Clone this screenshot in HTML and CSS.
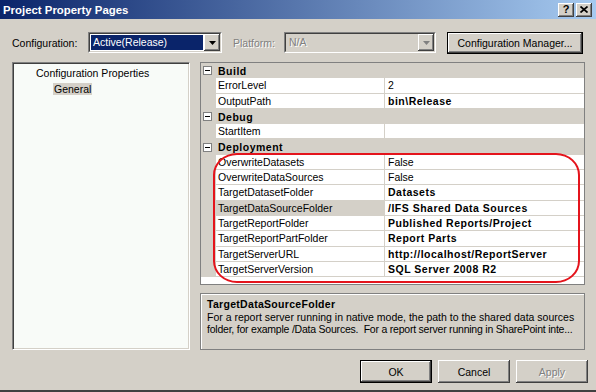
FILE: index.html
```html
<!DOCTYPE html>
<html>
<head>
<meta charset="utf-8">
<title>Project Property Pages</title>
<link rel="stylesheet" href="styles.css">
</head>
<body>
<div class="window">
  <div class="titlebar">
    <span class="title">Project Property Pages</span>
    <div class="caption-btns">
      <span class="cbtn help">?</span>
      <span class="cbtn close"><svg width="8" height="7" viewBox="0 0 8 7"><path d="M0.5 0.5L7.5 6.5M7.5 0.5L0.5 6.5" stroke="#000" stroke-width="1.7" fill="none"/></svg></span>
    </div>
  </div>

  <div class="config-row">
    <span class="lbl cfg">Configuration:</span>
    <div class="combo cfg-combo">
      <div class="combo-inner">
        <div class="combo-field"><span class="combo-sel">Active(Release)</span></div>
        <span class="combo-btn"><svg width="7" height="4" viewBox="0 0 7 4"><path d="M0 0H7L3.5 4Z" fill="#000"/></svg></span>
      </div>
    </div>
    <span class="lbl plat disabled-text">Platform:</span>
    <div class="combo plat-combo">
      <div class="combo-inner">
        <div class="combo-field"><span class="combo-dis disabled-text">N/A</span></div>
        <span class="combo-btn"><svg width="7" height="4" viewBox="0 0 7 4"><path d="M0 0H7L3.5 4Z" fill="#808080"/></svg></span>
      </div>
    </div>
    <button class="btn default cfgmgr">Configuration Manager...</button>
  </div>

  <div class="main">
    <div class="tree">
      <div class="tree-item l1">Configuration Properties</div>
      <div class="tree-item l2"><span class="tree-sel">General</span></div>
    </div>

    <div class="right">
      <div class="grid">
        <div class="cat"><span class="toggle"></span><span class="cat-name">Build</span></div>
        <div class="prop"><span class="n">ErrorLevel</span><span class="v">2</span></div>
        <div class="prop"><span class="n">OutputPath</span><span class="v b">bin\Release</span></div>
        <div class="cat"><span class="toggle"></span><span class="cat-name">Debug</span></div>
        <div class="prop"><span class="n">StartItem</span><span class="v"></span></div>
        <div class="cat"><span class="toggle"></span><span class="cat-name">Deployment</span></div>
        <div class="prop"><span class="n">OverwriteDatasets</span><span class="v">False</span></div>
        <div class="prop"><span class="n">OverwriteDataSources</span><span class="v">False</span></div>
        <div class="prop"><span class="n">TargetDatasetFolder</span><span class="v b">Datasets</span></div>
        <div class="prop"><span class="n sel">TargetDataSourceFolder</span><span class="v b">/IFS Shared Data Sources</span></div>
        <div class="prop"><span class="n">TargetReportFolder</span><span class="v b">Published Reports/Project</span></div>
        <div class="prop"><span class="n">TargetReportPartFolder</span><span class="v b">Report Parts</span></div>
        <div class="prop"><span class="n">TargetServerURL</span><span class="v b">http://localhost/ReportServer</span></div>
        <div class="prop"><span class="n">TargetServerVersion</span><span class="v b">SQL Server 2008 R2</span></div>
        <div class="highlight"></div>
      </div>
      <div class="desc">
        <div class="desc-title">TargetDataSourceFolder</div>
        <div class="desc-line">For a report server running in native mode, the path to the shared data sources</div>
        <div class="desc-line tight">folder, for example /Data Sources.&nbsp; For a report server running in SharePoint inte...</div>
      </div>
    </div>
  </div>

  <div class="footer">
    <button class="btn default">OK</button>
    <button class="btn">Cancel</button>
    <button class="btn disabled-text">Apply</button>
  </div>
</div>
</body>
</html>
```

FILE: styles.css
```css
body {
  margin: 0;
  background: #d4d0c8;
  font-family: "Liberation Sans", Arial, sans-serif;
  font-size: 10.5px;
  color: #000;
}

.window {
  width: 596px;
  height: 392px;
  box-sizing: border-box;
  border-bottom: 2px solid #404040;
  overflow: hidden;
  display: flex;
  flex-direction: column;
}

/* title bar */
.titlebar {
  height: 19px;
  flex: none;
  display: flex;
  align-items: center;
  padding: 0 4px 0 3px;
  background: linear-gradient(90deg, #0a246a 0%, #a6caf0 100%);
}
.title {
  color: #fff;
  font-weight: bold;
  font-size: 11.4px;
}
.caption-btns {
  margin-left: auto;
  display: flex;
  gap: 2px;
}
.cbtn {
  width: 16px;
  height: 14px;
  box-sizing: border-box;
  background: #d4d0c8;
  box-shadow: inset -1px -1px #404040, inset 1px 1px #fff, inset -2px -2px #808080;
  display: flex;
  align-items: center;
  justify-content: center;
  font-weight: bold;
  font-size: 11px;
  line-height: 1;
  padding-bottom: 1px;
}

/* configuration row */
.config-row {
  display: flex;
  align-items: center;
  height: 21px;
  margin-top: 13px;
  padding-left: 12px;
  flex: none;
}
.lbl.cfg { width: 76px; }
.lbl.plat { width: 51px; margin-left: 11px; }
.disabled-text {
  color: #808080;
  text-shadow: 1px 1px #fff;
}

.combo {
  height: 21px;
  box-sizing: border-box;
  border: 1px solid;
  border-color: #808080 #fff #fff #808080;
}
.combo-inner {
  height: 100%;
  box-sizing: border-box;
  border: 1px solid;
  border-color: #404040 #d4d0c8 #d4d0c8 #404040;
  display: flex;
}
.cfg-combo { width: 134px; }
.cfg-combo .combo-inner { background: #fff; }
.plat-combo { width: 152px; }
.plat-combo .combo-inner { background: #d4d0c8; }
.combo-field {
  flex: 1;
  padding: 1px;
  display: flex;
}
.combo-sel {
  flex: 1;
  background: #0a246a;
  color: #fff;
  padding-left: 2px;
  line-height: 15px;
}
.combo-dis {
  padding-left: 2px;
  line-height: 15px;
}
.combo-btn {
  width: 16px;
  box-sizing: border-box;
  background: #d4d0c8;
  box-shadow: inset -1px -1px #404040, inset 1px 1px #fff, inset -2px -2px #808080;
  display: flex;
  align-items: center;
  justify-content: center;
}

.btn {
  font-family: inherit;
  font-size: 10.5px;
  background: #d4d0c8;
  border: none;
  box-sizing: border-box;
  box-shadow: inset -1px -1px #404040, inset 1px 1px #fff, inset -2px -2px #808080;
  padding: 0;
  margin: 0;
  color: #000;
  width: 72px;
  height: 23px;
}
.btn.default {
  border: 1px solid #000;
}
.btn.disabled-text {
  color: #808080;
  text-shadow: 1px 1px #fff;
}
.btn.cfgmgr {
  width: 136px;
  height: 22px;
  margin-left: 11px;
}

/* main area */
.main {
  display: flex;
  gap: 10px;
  margin-top: 9px;
  padding-left: 12px;
  flex: none;
}
.tree {
  width: 178px;
  height: 288px;
  box-sizing: border-box;
  background: #f8fbf8;
  border: 1px solid;
  border-color: #808080 #fff #fff #808080;
  box-shadow: inset 1px 1px #404040, inset -1px -1px #d4d0c8;
  padding-top: 2px;
}
.tree-item {
  height: 16px;
  line-height: 16px;
  white-space: nowrap;
}
.tree-item.l1 { padding-left: 23px; }
.tree-item.l2 { padding-left: 40px; }
.tree-sel {
  display: inline-block;
  background: #d4d0c8;
  line-height: 12px;
  padding: 0 1px;
}

.right {
  width: 385px;
  display: flex;
  flex-direction: column;
  gap: 8px;
}
.grid {
  height: 223px;
  box-sizing: border-box;
  border: 1px solid #808080;
  background: #fff;
  position: relative;
}
.cat {
  display: flex;
  align-items: center;
  height: 15.3px;
  background: #d4d0c8;
}
.toggle {
  width: 9px;
  height: 9px;
  box-sizing: border-box;
  border: 1px solid #808080;
  background: #fff;
  margin-left: 2px;
  margin-right: 6px;
  position: relative;
}
.toggle::after {
  content: "";
  position: absolute;
  left: 1px;
  right: 1px;
  top: 3px;
  height: 1px;
  background: #000;
}
.cat-name {
  font-weight: bold;
  letter-spacing: 0.5px;
}
.prop {
  display: flex;
  height: 15.3px;
  box-sizing: border-box;
  padding: 0 0 1px 15px;
  background: #d4d0c8;
}
.n {
  width: 168px;
  margin-right: 1px;
  box-sizing: border-box;
  background: #fff;
  padding-left: 2px;
  line-height: 14.3px;
  white-space: nowrap;
}
.n.sel { background: #d4d0c8; }
.v {
  flex: 1;
  background: #fff;
  padding-left: 3px;
  line-height: 14.3px;
  white-space: nowrap;
}
.b {
  font-weight: bold;
  letter-spacing: 0.5px;
}
.highlight {
  position: absolute;
  left: 12px;
  top: 90px;
  width: 367px;
  height: 130px;
  box-sizing: border-box;
  border: 2px solid #e4141c;
  border-radius: 24px / 22px;
  pointer-events: none;
}

.desc {
  height: 57px;
  box-sizing: border-box;
  border: 1px solid #808080;
  box-shadow: inset 1px 1px #fff;
  padding: 3px 6px;
  overflow: hidden;
}
.desc-title {
  font-weight: bold;
  letter-spacing: 0.3px;
  line-height: 14px;
  margin-bottom: 1px;
}
.desc-line {
  line-height: 11.5px;
  white-space: nowrap;
}
.desc-line.tight {
  letter-spacing: -0.22px;
}

/* footer buttons */
.footer {
  display: flex;
  justify-content: flex-end;
  gap: 6px;
  margin-top: 10px;
  padding-right: 8px;
  flex: none;
}
```
